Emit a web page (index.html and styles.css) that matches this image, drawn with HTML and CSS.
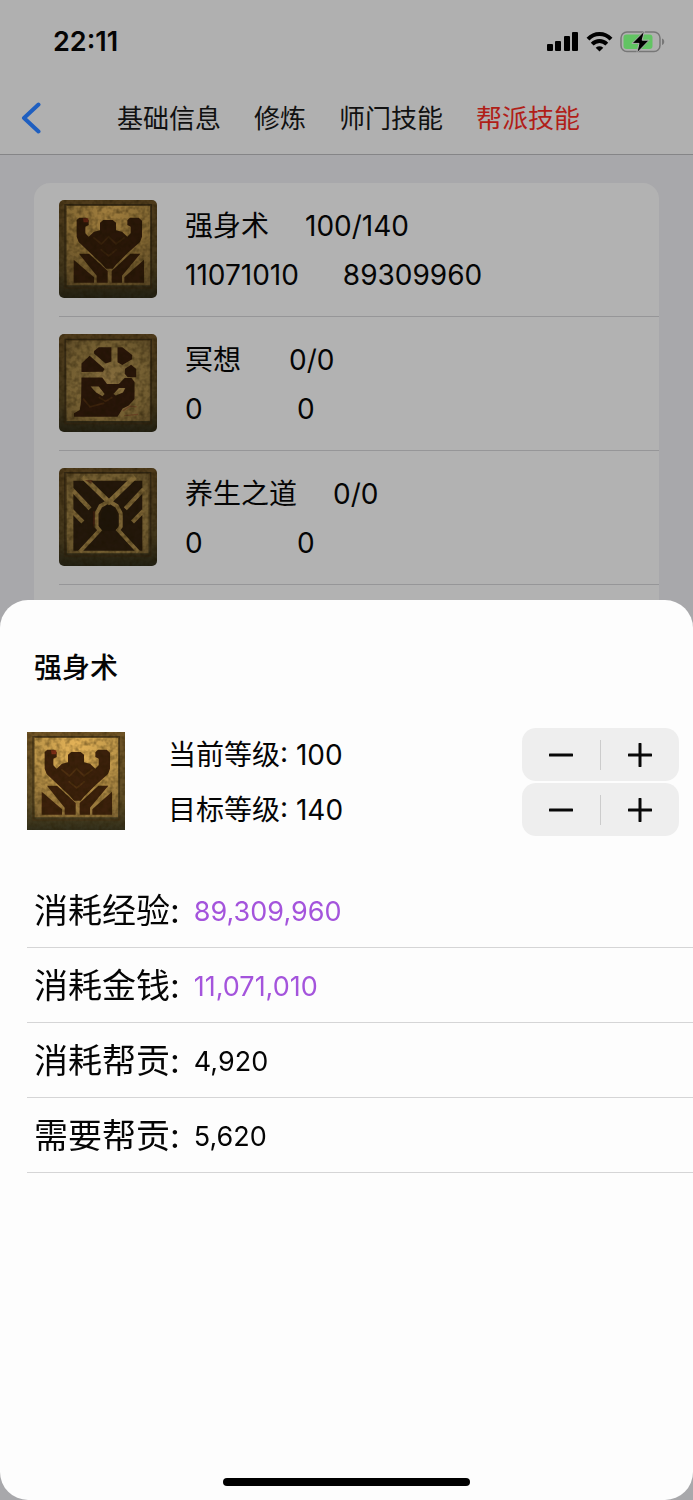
FILE: index.html
```html
<!DOCTYPE html>
<html lang="zh-CN">
<head>
<meta charset="utf-8">
<meta name="viewport" content="width=device-width, initial-scale=1">
<title>帮派技能</title>
<link rel="stylesheet" href="styles.css">
</head>
<body>
<svg class="defs" width="0" height="0" aria-hidden="true">
  <defs>
    <linearGradient id="frame" x1="0" y1="0" x2="0" y2="1">
      <stop offset="0" stop-color="#705426"/>
      <stop offset=".7" stop-color="#5e4d26"/>
      <stop offset="1" stop-color="#2c2b1a"/>
    </linearGradient>
    <radialGradient id="gold" cx=".5" cy=".1" r="1">
      <stop offset="0" stop-color="#e6b458"/>
      <stop offset=".45" stop-color="#c0984a"/>
      <stop offset="1" stop-color="#806533"/>
    </radialGradient>
    <radialGradient id="tan" cx=".5" cy=".5" r=".8">
      <stop offset="0" stop-color="#bf9c58"/>
      <stop offset=".6" stop-color="#a48646"/>
      <stop offset="1" stop-color="#775e30"/>
    </radialGradient>
    <filter id="stone" x="0" y="0" width="1" height="1" color-interpolation-filters="sRGB">
      <feGaussianBlur in="SourceGraphic" stdDeviation="2" result="soft"/>
      <feTurbulence type="fractalNoise" baseFrequency=".07" numOctaves="2" seed="4"/>
      <feColorMatrix type="matrix" values="0 0 0 0 .15  0 0 0 0 .1  0 0 0 0 0  .9 0 0 0 -.34" result="grain"/>
      <feComposite in="grain" in2="soft" operator="in" result="speck"/>
      <feMerge><feMergeNode in="soft"/><feMergeNode in="speck"/></feMerge>
    </filter>
    <symbol id="skill-body" viewBox="27 30 294 294" preserveAspectRatio="none">
      <g filter="url(#stone)">
        <path fill="url(#frame)" d="M17 20h314v314H17z"/>
        <path fill="none" stroke="#46361a" stroke-width="4" d="M45 44h259v250H45z"/>
        <path fill="url(#gold)" d="M50 48h250v238H50z"/>
        <path fill="#3b200b" d="M80 90l8-7h20l8 8v14l-10 5v20l10 10 16-15 18-4V98l10-8h28l10 8v23l18 4 16 15 10-10v-20l-10-5V91l8-8h26l10 9v48l-6 16-36 32-34 34-12 14h-20l-12-14-36-34-34-32-6-16z"/>
        <path fill="#3b200b" d="M87 191h30l56 52v35h-33v-21zM271 191h-30l-56 52v35h31v-21zM71 209l61 53v16H71zM282 209l-59 53v16h59z"/>
        <path fill="#842f18" d="M99 85h16v12h-14z"/>
        <path fill="none" stroke="#5a3814" stroke-width="5" opacity=".7" d="M130 142l24 20 22-22 22 22 26-20M152 178l24 20 24-20"/>
      </g>
    </symbol>
    <symbol id="skill-mind" viewBox="34 30 288 288" preserveAspectRatio="none">
      <g filter="url(#stone)">
        <path fill="url(#frame)" d="M24 20h308v308H24z"/>
        <path fill="none" stroke="#46361a" stroke-width="4" d="M52 46h253v247H52z"/>
        <path fill="url(#tan)" d="M56 50h245v236H56z"/>
        <path fill="#391e0c" d="M137 80l14-11h37v42l-17 6-34-30zM206 69h14l29 23v12l-29 17-14-8zM124 94l44 39-5 8-63 1v-25zM228 132l18-12 15 13v24h-25l-9-10zM100 158h61l14 19h35l17-18h20l9 12v50l-18 20-17 8-15 24H78v-10l17-10 4-26z"/>
        <path fill="#bc9a54" d="M127 184h24l17 22-6 7-19-11zM194 206l16-17h19l-7 13-21 9z"/>
        <path fill="none" stroke="#643b16" stroke-width="5" opacity=".7" d="M105 220l20 24 42-11M151 216l20 12 20-12"/>
        <path fill="none" stroke="#8c4a2a" stroke-width="4" opacity=".6" d="M222 256l20-14 20 2M226 270l40-4"/>
      </g>
    </symbol>
    <symbol id="skill-health" viewBox="27 30 300 294" preserveAspectRatio="none">
      <g filter="url(#stone)">
        <path fill="url(#frame)" d="M17 20h320v314H17z"/>
        <path fill="none" stroke="#46361a" stroke-width="4" d="M45 44h263v250H45z"/>
        <path fill="url(#tan)" d="M51 48h250v238H51z"/>
        <path fill="#32210f" d="M71 68h211v210H71z"/>
        <path fill="none" stroke="#b8964e" stroke-width="15" d="M100 56l80 76 80-76"/>
        <path fill="none" stroke="#b08e4a" stroke-width="12" d="M180 130l-26 14-12 22v40l10 10-62 66M180 130l24 14 12 22v40l-8 10 62 66"/>
        <path fill="none" stroke="#b08e4a" stroke-width="13" d="M66 94l56 58M66 158l34 34M286 94l-56 58M286 158l-34 34"/>
        <path fill="#2b1d0d" d="M180 142q24 4 24 40h4v24l-10 12h-38l-10-12v-24h4q2-36 26-40z"/>
        <path fill="#6b2b17" opacity=".6" d="M106 66h24l-4 12zM131 160h6v36l-6 14z"/>
      </g>
    </symbol>
  </defs>
</svg>

<div class="screen">
  <header class="header">
    <div class="status">
      <time class="clock">22:11</time>
      <div class="status-icons">
        <svg width="32" height="20" viewBox="0 0 32 20" aria-label="信号">
          <rect x="0" y="12" width="6" height="7" rx="1"/><rect x="8" y="9" width="6" height="10" rx="1"/><rect x="17" y="4" width="6" height="15" rx="1"/><rect x="25" y="0" width="6" height="19" rx="1"/>
        </svg>
        <svg width="27" height="20" viewBox="0 0 27 20" aria-label="无线网络">
          <g fill="none" stroke="#000" stroke-width="4"><path d="M2 7.200C8.500 .4 18.500 .4 25 7.200"/><path d="M6.200 12.200C10.400 8 16.600 8 20.800 12.200"/></g>
          <path d="M9.700 15.700Q13.500 13 17.300 15.700L13.500 19.500z"/>
        </svg>
        <svg width="45" height="22" viewBox="0 0 45 22" aria-label="电池充电中">
          <rect x="1" y="1" width="39" height="19.500" rx="6" fill="none" stroke="#777" stroke-width="1.500"/>
          <rect x="3.500" y="3.500" width="29" height="14.500" rx="3" fill="#62c463"/>
          <path fill="#777" d="M42 7.500c3 1 3 5.500 0 6.500z"/>
          <path fill="#000" stroke="#b0b0b0" stroke-width="1" d="M24.400 0L12 12.400h7L16.800 22 29.200 9.200h-7z"/>
        </svg>
      </div>
    </div>
    <nav class="nav">
      <button class="back" type="button" aria-label="返回">
        <svg width="20" height="32" viewBox="0 0 20 32"><path fill="none" stroke="#1f5fc0" stroke-width="4" stroke-linecap="round" stroke-linejoin="round" d="M17.500 2.500L3 16l14.500 13.500"/></svg>
      </button>
      <div class="tabs">
        <a href="#info">基础信息</a>
        <a href="#practice">修炼</a>
        <a href="#school">师门技能</a>
        <a href="#guild" class="current" aria-current="page">帮派技能</a>
      </div>
    </nav>
  </header>

  <main class="content">
    <ul class="skills">
      <li class="skill">
        <svg class="skill-icon dim" aria-hidden="true"><use href="#skill-body"/></svg>
        <div class="skill-text">
          <div class="line line-name"><span>强身术</span><span>100/140</span></div>
          <div class="line line-cost"><span>11071010</span><span>89309960</span></div>
        </div>
      </li>
      <li class="skill">
        <svg class="skill-icon dim" aria-hidden="true"><use href="#skill-mind"/></svg>
        <div class="skill-text">
          <div class="line line-name"><span>冥想</span><span>0/0</span></div>
          <div class="line line-cost"><span>0</span><span>0</span></div>
        </div>
      </li>
      <li class="skill">
        <svg class="skill-icon dim" aria-hidden="true"><use href="#skill-health"/></svg>
        <div class="skill-text">
          <div class="line line-name"><span>养生之道</span><span>0/0</span></div>
          <div class="line line-cost"><span>0</span><span>0</span></div>
        </div>
      </li>
    </ul>
  </main>
</div>

<section class="sheet" role="dialog" aria-labelledby="sheet-title">
  <h1 class="sheet-title" id="sheet-title">强身术</h1>
  <div class="detail">
    <svg class="skill-icon" aria-hidden="true"><use href="#skill-body"/></svg>
    <div class="levels">
      <div class="level">
        <span class="level-text">当前等级: 100</span>
        <div class="stepper" role="group" aria-label="当前等级">
          <button type="button" aria-label="减少"><svg width="24" height="24" viewBox="0 0 24 24"><path d="M1 12h22"/></svg></button>
          <button type="button" aria-label="增加"><svg width="24" height="24" viewBox="0 0 24 24"><path d="M1 12h22M12 1v22"/></svg></button>
        </div>
      </div>
      <div class="level">
        <span class="level-text">目标等级: 140</span>
        <div class="stepper" role="group" aria-label="目标等级">
          <button type="button" aria-label="减少"><svg width="24" height="24" viewBox="0 0 24 24"><path d="M1 12h22"/></svg></button>
          <button type="button" aria-label="增加"><svg width="24" height="24" viewBox="0 0 24 24"><path d="M1 12h22M12 1v22"/></svg></button>
        </div>
      </div>
    </div>
  </div>
  <dl class="costs">
    <div class="cost"><dt>消耗经验:</dt><dd class="accent">89,309,960</dd></div>
    <div class="cost"><dt>消耗金钱:</dt><dd class="accent">11,071,010</dd></div>
    <div class="cost"><dt>消耗帮贡:</dt><dd>4,920</dd></div>
    <div class="cost"><dt>需要帮贡:</dt><dd>5,620</dd></div>
  </dl>
  <div class="home-indicator"></div>
</section>
</body>
</html>
```
FILE: styles.css
```css
* { box-sizing: border-box; }

body {
  margin: 0;
  min-height: 100vh;
  background: #a8a8ab;
  color: #050505;
  font-family: Inter, "Noto Sans CJK SC", sans-serif;
  font-size: 28px;
}

button {
  padding: 0;
  border: 0;
  background: none;
  color: inherit;
  font: inherit;
}

svg { display: block; }

.defs { position: absolute; }

.header {
  background: #b0b0b0;
  border-bottom: 1px solid #858587;
}

.status {
  display: flex;
  align-items: center;
  justify-content: space-between;
  height: 83px;
  padding: 0 28px 0 53px;
}

.clock {
  font-size: 27px;
  font-weight: 600;
}

.status-icons {
  display: flex;
  align-items: center;
  gap: 7px;
}

.nav {
  display: grid;
  grid-template-columns: 1fr auto 1fr;
  align-items: center;
  height: 71px;
  padding: 0 17px 2px 21px;
}

.back { justify-self: start; }

.tabs {
  display: flex;
  gap: 33px;
  padding-top: 2px;
  font-size: 26px;
  line-height: 36px;
}

.tabs a {
  color: #111;
  text-decoration: none;
  white-space: nowrap;
}

.tabs .current { color: #b01e18; }

.content { padding: 28px 34px 0; }

.skills {
  margin: 0;
  padding: 0 0 100px 25px;
  list-style: none;
  background: #b2b2b2;
  border-radius: 16px;
}

.skill {
  display: flex;
  align-items: flex-start;
  gap: 28px;
  height: 134px;
  padding-top: 17px;
  border-bottom: 1px solid #969698;
}

.skill-icon {
  flex: none;
  width: 98px;
  height: 98px;
}

.dim {
  border-radius: 5px;
  filter: brightness(.7);
}

.skill-text { padding-top: 2px; }

.line {
  display: flex;
  line-height: 49px;
}

.line span:first-child { min-width: 68px; }
.line-name { gap: 36px; }
.line-cost { gap: 44px; }

.sheet {
  position: fixed;
  inset: 40% 0 0;
  display: flex;
  flex-direction: column;
  padding: 48px 0 14px 27px;
  background: #fdfdfd;
  border-radius: 28px;
}

.sheet-title {
  margin: 0 0 40px;
  padding-left: 7px;
  font-size: 28px;
  font-weight: 500;
  line-height: 40px;
}

.detail {
  display: flex;
  align-items: flex-start;
  gap: 43px;
  margin: 0 14px 37px 0;
}

.detail .skill-icon { margin-top: 4px; }

.levels {
  display: flex;
  flex: 1;
  flex-direction: column;
  gap: 2px;
}

.level {
  display: flex;
  align-items: center;
  justify-content: space-between;
}

.level-text { padding-bottom: 4px; }

.stepper {
  display: flex;
  align-items: center;
  width: 157px;
  height: 53px;
  background: #eee;
  border-radius: 14px;
}

.stepper button {
  display: flex;
  flex: 1;
  align-items: center;
  justify-content: center;
  height: 30px;
}

.stepper button + button { border-left: 1px solid #ccc; }

.stepper path {
  fill: none;
  stroke: #080808;
  stroke-width: 3;
  stroke-linecap: round;
}

.costs { margin: 0; }

.cost {
  display: flex;
  align-items: center;
  gap: 14px;
  height: 75px;
  padding: 2px 0 0 7px;
  border-bottom: 1px solid #d5d5d6;
}

.cost dt {
  font-size: 34px;
  line-height: 48px;
}

.cost dd {
  margin: 0;
  font-size: 27px;
}

.accent { color: #a454dc; }

.home-indicator {
  align-self: center;
  width: 37%;
  height: 8px;
  margin: auto 27px 0 0;
  background: #000;
  border-radius: 4px;
}
```
